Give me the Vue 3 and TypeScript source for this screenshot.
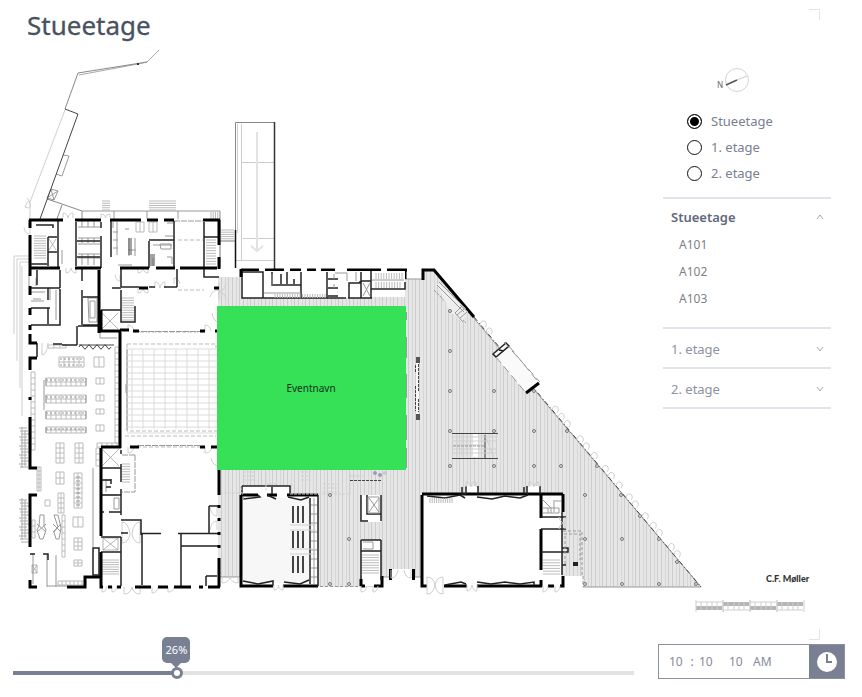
<script setup lang="ts">
import { computed, ref } from 'vue'

interface Floor {
  id: string
  name: string
  rooms: string[]
}

const floors: Floor[] = [
  { id: 'f0', name: 'Stueetage', rooms: ['A101', 'A102', 'A103'] },
  { id: 'f1', name: '1. etage', rooms: [] },
  { id: 'f2', name: '2. etage', rooms: [] },
]

const selected = ref('f0')
const opened = ref('f0')
const progress = ref(26)
const hour = ref('10')
const minute = ref('10')
const second = ref('10')
const period = ref('AM')

const title = computed(() => floors.find((f) => f.id === selected.value)?.name ?? '')

function toggle(id: string) {
  opened.value = opened.value === id ? '' : id
}

const range = (n: number, start = 0, step = 1) =>
  Array.from({ length: n }, (_, i) => start + i * step)

// Sports court lines
const courtPath =
  range(8, 132, 11).map((x) => `M${x} 349V429`).join('') +
  range(15, 349, 6).map((y) => `M127 ${y}H217`).join('')

// Library shelving: x, y, columns, rows, cell width, cell height
type Shelf = [number, number, number, number, number, number]
const shelves: Shelf[] = [
  [59, 357, 5, 2, 5, 5], [46, 378, 8, 2, 5, 4], [46, 395, 8, 2, 5, 4],
  [46, 411, 8, 2, 5, 4], [46, 427, 8, 2, 5, 3], [94, 357, 2, 1, 5, 10],
  [96, 378, 2, 1, 4, 6], [96, 395, 2, 1, 4, 6], [96, 409, 2, 1, 4, 5],
  [96, 425, 2, 1, 4, 6], [56, 443, 2, 4, 4, 5], [75, 443, 2, 4, 4, 5],
  [56, 472, 2, 2, 4, 6], [74, 473, 2, 7, 4, 5], [73, 517, 2, 1, 5, 10],
  [74, 538, 2, 3, 4, 4], [74, 560, 2, 2, 4, 3], [45, 500, 1, 1, 5, 6],
  [58, 493, 2, 4, 3, 5], [62, 515, 1, 7, 3, 6], [32, 520, 1, 3, 3, 6],
  [31, 372, 1, 13, 4, 6], [115, 347, 1, 16, 4, 6], [37, 467, 2, 6, 2, 4],
  [58, 581, 7, 1, 4, 4], [136, 222, 2, 1, 4, 10], [149, 222, 2, 1, 4, 10],
  [48, 345, 3, 1, 6, 3], [97, 443, 4, 1, 5, 4], [96, 448, 1, 3, 4, 6],
]
const grid = ([x, y, c, r, w, h]: Shelf) =>
  range(c + 1).map((i) => `M${x + i * w} ${y}v${r * h}`).join('') +
  range(r + 1).map((i) => `M${x} ${y + i * h}h${c * w}`).join('')
const shelfPath = shelves.map(grid).join('')

// Stairs: x, y, width, height, number of steps, direction of the treads
type Stair = [number, number, number, number, number, 'h' | 'v']
const stairs: Stair[] = [
  [34, 236, 12, 22, 9, 'h'], [206, 240, 10, 24, 9, 'h'], [122, 298, 12, 22, 9, 'h'],
  [102, 560, 17, 14, 6, 'h'], [362, 555, 17, 18, 7, 'h'], [376, 273, 26, 6, 10, 'v'],
  [376, 282, 24, 6, 9, 'v'], [543, 560, 17, 14, 5, 'h'], [430, 498, 22, 5, 10, 'v'],
  [149, 201, 27, 9, 4, 'h'], [102, 201, 8, 9, 4, 'h'], [221, 230, 13, 11, 5, 'h'],
  [275, 294, 50, 4, 20, 'v'], [122, 464, 8, 18, 7, 'h'], [211, 212, 9, 8, 4, 'v'],
]
const stairPath = stairs
  .map(([x, y, w, h, n, d]) =>
    range(n + 1)
      .map((i) => (d === 'h' ? `M${x} ${y + (i * h) / n}h${w}` : `M${x + (i * w) / n} ${y}v${h}`))
      .join(''),
  )
  .join('')

// Bicycle racks outside the west wall
const rackPath =
  range(14, 428, 3).map((y, i) => `M${19 + (i % 3)} ${y}h8`).join('') +
  range(15, 500, 3).map((y, i) => `M${19 + (i % 3)} ${y}h8`).join('') +
  'M22 427V468M25 430V466M22 498V540M25 500V538'

// Columns in the foyer
const columns: [number, number][] = [
  [450, 311], [450, 351], [450, 391], [450, 431], [494, 391], [494, 431], [534, 391],
  [534, 431], [567, 431], [450, 466], [494, 466], [534, 466], [561, 466], [597, 466],
  [585, 495], [621, 495], [640, 516], [585, 539], [622, 539], [659, 539], [677, 562],
  [585, 584], [622, 584], [659, 584], [696, 584], [330, 584], [349, 584], [330, 495], [349, 539],
]

// Glazed doors along the slanted facade
const facade = [480, 486, 552, 558, 564, 577, 583, 591, 602, 608, 616, 626, 632, 642, 650, 656, 668, 674]
const facadeY = (x: number) => 270 + (x - 434) * 1.184
const facadeDoors = facade
  .map((x) => `M${x} ${facadeY(x)}q2 -6 6 -2q1 3 -1 5`)
  .join('')

// Swing doors: x, y, horizontal and vertical radius
const doors: [number, number, number, number][] = [
  [63, 218, 5, -5], [73, 218, -5, -5], [101, 218, 5, -4], [110, 218, -5, -4],
  [66, 268, 5, 5], [76, 268, -5, 5], [138, 268, 5, 5], [148, 268, -5, 5],
  [138, 288, 5, 5], [148, 288, -5, 5], [155, 288, 5, -6], [165, 288, -5, -6],
  [30, 228, -6, 6], [42, 343, 6, 12], [128, 331, 6, -6], [205, 331, 6, -6],
  [219, 297, -9, -7], [219, 313, -7, 9], [128, 447, 6, 6], [205, 447, 7, 6],
  [219, 458, -8, 8], [217, 507, -7, 9], [217, 530, -7, -9], [122, 534, 8, -12],
  [140, 534, -8, -12], [122, 534, 8, 9], [140, 534, -8, 9], [102, 586, 5, 6],
  [112, 586, 5, 6], [124, 587, 8, 7], [140, 587, -8, 7], [152, 587, 6, 6],
  [168, 587, 6, 5], [222, 577, 8, 6], [238, 577, -8, 6], [274, 585, 5, 5],
  [283, 585, -5, 5], [361, 586, 6, 6], [373, 586, 5, 6], [391, 570, 7, 8],
  [411, 570, -7, 8], [427, 585, 8, -8], [443, 585, -8, -8], [427, 585, 8, 9],
  [443, 585, -8, 9], [467, 585, 5, 6], [477, 585, -5, 6], [543, 586, 5, 6],
  [555, 586, 5, 6], [466, 487, 6, -5], [476, 487, -6, -5], [529, 487, 5, -5],
  [539, 487, -5, -5], [565, 517, -6, 6], [565, 529, -6, -6], [219, 283, 7, 8],
  [219, 300, 7, -8], [174, 284, 6, -6], [120, 275, -5, 6],
]
const doorPath = doors
  .map(([x, y, rx, ry]) => `M${x} ${y}v${ry}q${rx * 0.8} 0 ${rx} ${-ry}`)
  .join('')

// Scale bar segments, filled alternately in the lower and the upper half
const scaleBar = range(4).map((i) => ({ x: 696 + i * 27, y: i % 2 ? 602 : 606 }))
</script>

<template>
  <main class="page">
    <section class="stage">
      <svg class="plan" viewBox="0 0 862 640" role="img" aria-label="Plantegning">
        <defs>
          <pattern id="deck" width="11" height="8" patternUnits="userSpaceOnUse">
            <rect width="11" height="8" fill="#e6e6e6" />
            <path d="M1.5 0V8M8.5 0V8" stroke="#cdcdcd" />
            <path d="M5.5 0V8" stroke="#d6d6d6" />
          </pattern>
        </defs>

        <path class="ink corner" d="M809 9.500H819.500V20M809 639.500H819.500V629" />
        <g class="ink faint">
          <path d="M159 50L147 62L138 64L79 75" stroke="#aaa" />
          <path d="M147 62L78 73L65 109" stroke="#888" />
          <path d="M65 110L30 202V219" />
          <path d="M63 155L69 156L62 176L56 174M51 189L58 191L54 200L47 198ZM51 189L54 200M58 191L47 198" stroke="#999" />
          <path d="M47 199L62 204L82 211V219M62 205L57 219" stroke="#888" />
          <path d="M82 211H220V219M114 211V219M147 211V219M178 211V219" stroke="#999" />
          <path d="M25 207q4 -10 5 -3q2 6 -5 3M30 202l-3 -4" />
          <path d="M14 256H30M14 256V334M17 259H30M17 259V361M20 262H29M20 262V388M22 266V416" />
          <path :d="rackPath" stroke="#aaa" />
        </g>
        <path class="ink dark" d="M65 109L78 114L40 219" />
        <path d="M137 63h2v2h-2z" fill="#333" />

        <!-- ramp -->
        <g class="ink">
          <path d="M235.500 232V122.500H274" stroke="#888" />
          <path d="M237.500 124V233" stroke="#ccc" />
          <path d="M241.500 124V260M241 162.500H274M243 238.500H274M236 260.500H274" stroke="#ccc" />
          <path d="M257 132V251M251 246L257 251L263 246" stroke="#e2e2e2" stroke-width="2" />
          <path d="M274.500 122V269" stroke="#333" stroke-width="1.500" />
          <path d="M235.500 230V268" stroke="#111" stroke-width="1.500" />
          <path d="M220 241H235M220 219V268" stroke="#777" />
        </g>

        <!-- foyer deck -->
        <path
          d="M218 277H241V297H405V279H423V271H434L701 587H583V576H422V577H382V587H316V577H218Z"
          fill="url(#deck)"
        />
        <path class="ink mid" d="M434 271L701 587H583M405 279H423M218 577H241M382 577H422" />
        <path class="ink dark" d="M474 317L701 587" stroke-dasharray="5 3 1 2" />
        <path class="ink faint" :d="facadeDoors" />
        <path class="ink thick" d="M241 270H259M265 270H284M290 270H301M307 270H316M321 270H335M347 270H381M387 270H407M405 270V279M423 280V270H434L474 317" />

        <!-- service rooms along the north wall -->
        <path d="M242 271H405V288H371V298H242Z" fill="#fff" />
        <path class="ink wall" d="M242 270V298H263V272H242M263 298H346M348 298H372M301 272V298M327 272V298M328 279H338M328 288H338M328 296H338M361 272V298H371V271M349 298V283H360V281M361 281H371M371 289H405V282M287 272V284M272 272V285H301M281 284V274M294 284V279" />
        <path class="ink mid" d="M264 293H301M272 285V274M334 274V279M334 284V288M363 283L370 296M370 283L363 296M372 280H404M335 273H347V281M356 272V281" />

        <!-- event halls -->
        <path d="M241 495H318V586H241ZM423 495H562V586H423ZM241 486H290V496H241ZM361 495H381V522H361ZM361 540H381V586H361ZM390 569H413V584H390ZM465 486H478V496H465ZM527 486H540V496H527Z" fill="#fff" />
        <path d="M243 498H309V583H243Z" fill="#f7f7f7" />
        <path class="ink thick" d="M241 495V586H273M283 586H318M422 495V586H427M444 586H467M477 586H542M422 494H563M563 494V512M541 494V518M541 529V570M541 580V587M548 586H554M560 586H563V576M241 495H258M267 495H277M287 495H318M361 586V579M361 586H365M374 586H382V576" />
        <path class="ink wall" d="M242 486H290V494M242 486V494M272 487V494M318 495V586M310 498V584M361 495V521H368M367 495V514H381M381 495V521M361 540V579M361 540H381M381 540V580M361 551H381M541 517H566M541 529H566M541 552H563M562 512V575M466 486V494M478 486V494M462 487V494H466M527 486V494M540 486V494M524 487V494M562 548H568V552H562M562 565H566" />
        <path class="ink thick" d="M390.500 569V580M413.500 569V580" />
        <path class="ink wall" d="M243 499L260 497L258 495M267 495L276 499M288 497L301 500L309 497M243 581L258 584L273 581V586M284 582L300 584L309 580M427 496L445 498L460 495L465 498M477 497L492 499L505 496L520 498L528 495M445 585L461 582L466 584M477 582L491 584L505 582L520 584L534 582V585" />
        <path class="ink dark" d="M293 506V523M298 506V523M303 506V523M293 531V548M298 531V548M303 531V548M293 556V573M298 556V573M303 556V573" stroke-width="2" />
        <path class="ink mid" d="M311 505H317M311 514H317M311 523H317M311 532H317M311 541H317M311 550H317M311 559H317M311 568H317M311 577H317M314 498V584M368 497H379V513H368ZM369 498L379 512M379 498L369 512M363 542H373V549H363M543 500L551 508V513M543 508H559V513H543M548 508V513M553 501H561M554 502V512" />
        <path class="ink faint" d="M290 525H316M290 530H316M290 549H316M290 554H316" />
        <path d="M573 562h5v4h-5z" fill="#222" />
        <path class="ink mid" d="M563 531H582V576M564 534H580V560M565 536V564M320 586.500H361M583 576V587M241 487L244 501" stroke-dasharray="3 2" />

        <!-- dashed markings south of the event area -->
        <path class="ink faint" d="M243 472H255M243 476H255M243 480H255M301 472H311M301 476H311M301 480H311M323 484H337M323 488H337M323 492H337M266 484H277M220 493H242M290 494H350V472M266 472V490M350 476H366" stroke="#aaa" stroke-dasharray="3 1" />
        <path class="ink dark" d="M350 480.500H382" stroke-dasharray="3 1" />
        <circle cx="375" cy="473" r="2" fill="#989fb8" /><circle cx="380" cy="475" r="2" fill="#989fb8" /><circle cx="385" cy="473" r="2" fill="#c5c9d8" />

        <!-- foyer bench, stair and slanted kiosk -->
        <path d="M416 359H419V418H416Z" fill="#f7f7f7" />
        <path d="M416 357h4v6h-4zM416 414h4v6h-4z" fill="#555" />
        <path class="ink dark" d="M415.500 365V373M415.500 386V411M418.500 364V392M418.500 399V412" stroke-dasharray="3 1" />
        <path d="M473 434H478V457H473Z" fill="#fff" />
        <path class="ink dark" d="M452 433.500H498M452 458.500H498M485 435V458" />
        <path class="ink faint" d="M453 437H497M453 441H497M453 445H484M453 449H497M453 453H497M457 434V457M462 434V457M467 434V457M486 438L494 457" />
        <path class="ink mid" d="M453 446H484M434 290L466 323" stroke-dasharray="3 1" />
        <path d="M437 285L440 282L468 312L462 322L450 312Z" fill="#eee" />
        <path class="ink mid" d="M437 285L464 312M439 282L466 309M455 313L463 305M460 305L468 312M455 313L463 322M457 315L464 309M460 318L467 312" />
        <path d="M493 354L507 343L539 383L526 393Z" fill="#fafafa" />
        <path class="ink thick" d="M526 393L539 383" />
        <path class="ink wall" d="M493 354L506 343L509 346L496 357ZM499 350L504 351" />
        <path class="ink mid" d="M496 357L526 393M509 346L539 383M504 342L540 382" stroke-dasharray="8 4" />
        <path class="ink mid" d="M406.500 312V320M406.500 337V358M406.500 374V398M406.500 415V440M406.500 448V468" />
        <circle v-for="([x, y], i) in columns" :key="i" class="column" :cx="x" :cy="y" r="1.500" />

        <!-- west building, interior fittings -->
        <path class="ink light" :d="shelfPath" />
        <path class="ink mid" d="M46 380H86M46 397H86M46 413H86M46 429H86M60 359H83M60 365H83M77 476V508M79 476V508" stroke-dasharray="2 2" stroke-width="2" opacity="0.500" />
        <path class="ink mid" d="M46 378V386M86 378V386M46 395V403M86 395V403M46 411V419M86 411V419M46 427V433M86 427V433" />
        <path class="ink light" :d="stairPath" />
        <path class="ink court" :d="courtPath" />
        <path class="ink light" d="M127 344H216V348M127 344V431H217M125 436H216M134 332H203M137 447H201M178 290H204M178 240H203" stroke-dasharray="4 2" />
        <path class="ink mid" d="M174 221H203M134 331.500H202M138 445.500H201M135 455V492H122M122 455H135" stroke-dasharray="6 1" />
        <path class="ink mid" d="M127 349V430M126 384V393M93 468V547M47 586H68M29 275V286M36 278V286M33 553V584M47 555V587M56 555V587" />
        <path class="ink mid" d="M102 313L118 329M118 313L102 329M102 449L119 466M119 449L102 466M103 538H118V550H103ZM103 538L118 550M118 538L103 550M49 239L56 250M56 239L49 250M32 565H37V573H32ZM32 565L37 573M37 565L32 573" opacity="0.700" />
        <path class="ink mid" d="M40 515L39 526L37 530L40 539H43L46 530L44 526V515ZM37 524L46 532M46 524L37 532M54 515L58 527L54 532L56 539H59L61 528L58 515ZM53 524L61 532M61 524L53 532" stroke="#444" />
        <path class="ink dark" d="M79 347q2 -4 4 0q2 4 4 0q2 -4 4 0q2 4 4 0q2 -4 4 0q2 4 4 0q2 -4 4 0q2 4 4 0M79 345H114" />
        <path class="ink mid" d="M78 227H100M78 238H100M78 244H100M78 254H100M78 258H100M82 221V227M88 221V227M94 221V227M82 238V243M88 238V243M94 238V243M82 254V265M88 254V265M94 254V265M113 222V228M117 222V255M113 232H118M113 240H118M113 248H118M125 229H129M153 258V266M153 245H172M167 223H173M165 236H173M129 238V256M135 238V256M128 250H136M160 244H171V249H161ZM167 257H172V264M118 265H132M88 298H97V322H89ZM90 301H95V318H90ZM102 495H118M114 498H119V509H114ZM103 480H111M106 479V492M100 333V338H117M44 380V410M62 250V264M31 292H45M31 301H44M50 287V300M56 290V320M33 299H41" />
        <path d="M128 238h4v17h-4zM150 254h5v12h-5z" fill="#666" opacity="0.600" />
        <path class="ink faint" :d="doorPath" stroke="#aaa" />

        <!-- west building, partitions -->
        <path class="ink wall" d="M58 220V268M48 237V266M48 237H57M48 252H57M36 225H53V228M31 264H47M76 222V266M77 241H100M77 257H100M101 222V228M101 236V268M111 221V257M149 241V268M149 240H174M174 221V268M204 222V268M204 237H219M31 288H60M60 270V288M37 270V285M48 288V300M31 308H48V324M48 308H50M60 289V325H31M82 269V281M82 290V325M83 297H99M83 325H99M77 326V345M78 326H99M77 345H62M62 344H53M37 343V357M121 269V287M121 287H139M149 287H155M164 287H177M121 290V322H135V306M112 288H121M177 269V287M101 310H121M204 269V277H219M102 468H121M101 480H111M111 479V484M106 487H111M101 495H121M101 512H104M109 512H121M101 537H121M121 512V515M121 450V454M121 464V482M121 489V512M121 537V586M101 552H121M121 520H141V535M121 533H128M141 533.500H161M178 533.500H219M142 534V585M181 534V586M181 546H218M209 506H219M209 506V533M93 548H99V575H93ZM30 554H35M43 554H48V560M206 576H217M206 576V586" />

        <!-- west building, load-bearing walls -->
        <path class="ink thick" d="M29 220H63M75 220H101M110 220H141M147 220H158M164 220H174M203 220H220M30 220V228M30 235V269M29 268H60M75 268H101M120 268H149M156 268H175M180 268H204M219 220V245M219 257V269M204 268H206M30 269V276M30 286V295M30 308V315M30 325V330M30 334V343H37M37 358H30V370M30 397V400M30 417V468H37M37 495H30V547M30 580V587H37M67 587H85V577H100M99 270V333M99 331H121M120 332V448M101 310V331M120 330H129M133 331H139M200 331H205M215 331H217M101 447H121M130 447H139M200 447H205M211 447H217M101 448V536M101 552V587H103M108 587H112M117 587H121M135 587H151M158 587H168M174 587H191M199 587H203M208 587H220M219 470V495M219 505V508M219 518V521M219 532V535M219 545V548M219 558V587M219 288H214M148 288H139M241 269V277M205 268H217" />

        <!-- booked area -->
        <g>
          <rect x="217" y="306" width="189" height="164" fill="#36e158" />
          <text x="311" y="392" text-anchor="middle" class="event">Eventnavn</text>
        </g>

        <!-- compass, signature and scale -->
        <circle cx="737" cy="80" r="11.500" fill="none" stroke="#d4d4d4" />
        <path d="M737 80L747 76" stroke="#ccc" />
        <path d="M726 85L737 80" stroke="#555" stroke-width="1.500" />
        <text x="717" y="88" class="north">N</text>
        <text x="766" y="582" class="sign">C.F. Møller</text>
        <g v-for="(s, i) in scaleBar" :key="s.x">
          <rect :x="s.x" :y="s.y" width="26" height="4" fill="#b5b5b5" />
          <path class="ink faint" :d="`M${s.x} ${i % 2 ? 610 : 602}h26M${s.x + 5} 602v8M${s.x + 11} 602v8M${s.x + 16} 602v8M${s.x + 21} 602v8`" />
          <path class="ink faint" :d="`M${s.x} 600v12M${s.x + 27} 600v12`" />
        </g>
      </svg>

      <h1 class="title">{{ title }}</h1>

      <aside class="side">
        <div class="levels" role="radiogroup" aria-label="Etage">
          <label v-for="f in floors" :key="f.id" class="level">
            <input v-model="selected" type="radio" name="floor" :value="f.id" />
            <span>{{ f.name }}</span>
          </label>
        </div>
        <div class="accordion">
          <section v-for="f in floors" :key="f.id" class="panel" :class="{ open: opened === f.id }">
            <button type="button" class="panel-head" :aria-expanded="opened === f.id" @click="toggle(f.id)">
              <span>{{ f.name }}</span>
              <svg class="chevron" viewBox="0 0 8 8" aria-hidden="true"><path d="M1 2L4 6L7 2" /></svg>
            </button>
            <ul v-if="opened === f.id" class="rooms">
              <li v-for="room in f.rooms" :key="room">{{ room }}</li>
            </ul>
          </section>
        </div>
      </aside>
    </section>

    <footer class="controls">
      <div class="slider">
        <output class="bubble" for="progress" :style="{ left: progress + '%' }">{{ progress }}%</output>
        <input
          id="progress"
          v-model.number="progress"
          type="range"
          min="0"
          max="100"
          aria-label="Tidspunkt"
          :style="{ '--value': progress + '%' }"
        />
      </div>
      <div class="time">
        <input v-model="hour" aria-label="Time" />
        <span class="colon">:</span>
        <input v-model="minute" aria-label="Minut" />
        <input v-model="second" class="gap" aria-label="Sekund" />
        <input v-model="period" class="period" aria-label="AM eller PM" />
        <button type="button" class="clock" aria-label="Vælg tid">
          <svg viewBox="0 0 20 20" aria-hidden="true">
            <circle cx="10" cy="10" r="10" fill="#fff" />
            <path d="M10 2V10H15" />
          </svg>
        </button>
      </div>
    </footer>
  </main>
</template>

<style>
body {
  background: #fff;
}
</style>

<style scoped>
.page {
  font-family: 'Noto Sans', 'Open Sans', sans-serif;
  color: #7a8094;
}
.stage {
  display: grid;
  grid-template-columns: minmax(0, 1fr);
}
.stage > * {
  grid-area: 1 / 1;
}
.plan {
  display: block;
  width: 100%;
}
.ink {
  fill: none;
}
.corner {
  stroke: #e4e4e4;
}
.faint {
  stroke: #cfcfcf;
}
.light {
  stroke: #bbb;
}
.court {
  stroke: #dcdcdc;
}
.mid {
  stroke: #999;
}
.dark {
  stroke: #444;
}
.wall {
  stroke: #222;
  stroke-width: 1.5px;
}
.thick {
  stroke: #000;
  stroke-width: 3px;
}
.column {
  fill: #ddd;
  stroke: #777;
}
.event {
  font-size: 10px;
  fill: #10301a;
}
.north {
  font-size: 8px;
  font-weight: 500;
  fill: #777;
}
.sign {
  font-family: Lato, sans-serif;
  font-size: 9px;
  font-weight: 900;
  fill: #333;
}
.title {
  justify-self: start;
  align-self: start;
  margin: 7px 27px;
  font-size: 26px;
  line-height: 36px;
  font-weight: 400;
  color: #4a5160;
  -webkit-text-stroke: 0.3px #4a5160;
}
.side {
  justify-self: end;
  align-self: start;
  width: 168px;
  margin: 108px 31px 0 0;
  font-size: 13px;
}
.levels {
  display: grid;
  padding: 0 24px 11px;
}
.level {
  display: flex;
  align-items: center;
  gap: 9px;
  height: 26px;
}
.level input {
  appearance: none;
  width: 15px;
  height: 15px;
  margin: 0;
  border: 1px solid #111;
  border-radius: 50%;
  background: #fff;
}
.level input:checked {
  background: #000;
  box-shadow: inset 0 0 0 2px #fff;
}
.accordion {
  border-top: 2px solid #e2e3eb;
}
.panel {
  border-bottom: 2px solid #e2e3eb;
}
.panel-head {
  display: flex;
  align-items: center;
  justify-content: space-between;
  width: 100%;
  height: 38px;
  padding: 2px 7px 0 8px;
  border: 0;
  background: none;
  font: inherit;
  color: #8d92a2;
}
.chevron {
  width: 8px;
  height: 8px;
  fill: none;
  stroke: #a3a7b5;
}
.open .panel-head {
  height: 32px;
  padding-top: 3px;
  font-weight: 600;
  color: #626878;
}
.open .chevron {
  transform: rotate(180deg);
}
.rooms {
  margin: 0;
  padding: 0 16px 15px;
  list-style: none;
  font-size: 12px;
  line-height: 27px;
  color: #7d7f86;
}
.controls {
  display: flex;
  align-items: flex-end;
  gap: 24px;
  padding: 4px 17px 18px 13px;
}
.slider {
  position: relative;
  flex: 1;
  display: flex;
}
.slider input {
  appearance: none;
  width: 100%;
  height: 12px;
  margin: 0;
  background: linear-gradient(#7a8094, #7a8094) 0 / var(--value) 4px no-repeat,
    linear-gradient(#e3e3e3, #e3e3e3) 0 / 100% 4px no-repeat;
}
.slider input::-webkit-slider-thumb {
  appearance: none;
  box-sizing: border-box;
  width: 12px;
  height: 12px;
  border: 3px solid #7a8094;
  border-radius: 50%;
  background: #fff;
}
.bubble {
  position: absolute;
  bottom: 16px;
  width: 28px;
  margin-left: -12px;
  border-radius: 5px;
  background: #7a8094;
  color: #fff;
  font-size: 11px;
  line-height: 26px;
  text-align: center;
}
.bubble::after {
  content: '';
  position: absolute;
  top: 100%;
  left: 9px;
  border: 5px solid transparent;
  border-top-color: #7a8094;
  border-bottom: 0;
}
.time {
  display: flex;
  align-items: center;
  box-sizing: border-box;
  width: 187px;
  height: 35px;
  padding-left: 10px;
  border: 1px solid #8b90a3;
}
.time input {
  width: 16px;
  padding: 0;
  border: 0;
  background: none;
  font: inherit;
  font-size: 12px;
  color: #868b9b;
}
.time .colon {
  width: 14px;
  text-align: center;
  font-size: 12px;
}
.time .gap {
  margin-left: 14px;
}
.time .period {
  width: 24px;
  margin-left: 8px;
}
.clock {
  display: grid;
  place-items: center;
  align-self: stretch;
  width: 35px;
  margin-left: auto;
  padding: 0;
  border: 0;
  background: #7a8094;
}
.clock svg {
  width: 20px;
  height: 20px;
}
.clock path {
  fill: none;
  stroke: #7a8094;
  stroke-width: 2px;
}
</style>
